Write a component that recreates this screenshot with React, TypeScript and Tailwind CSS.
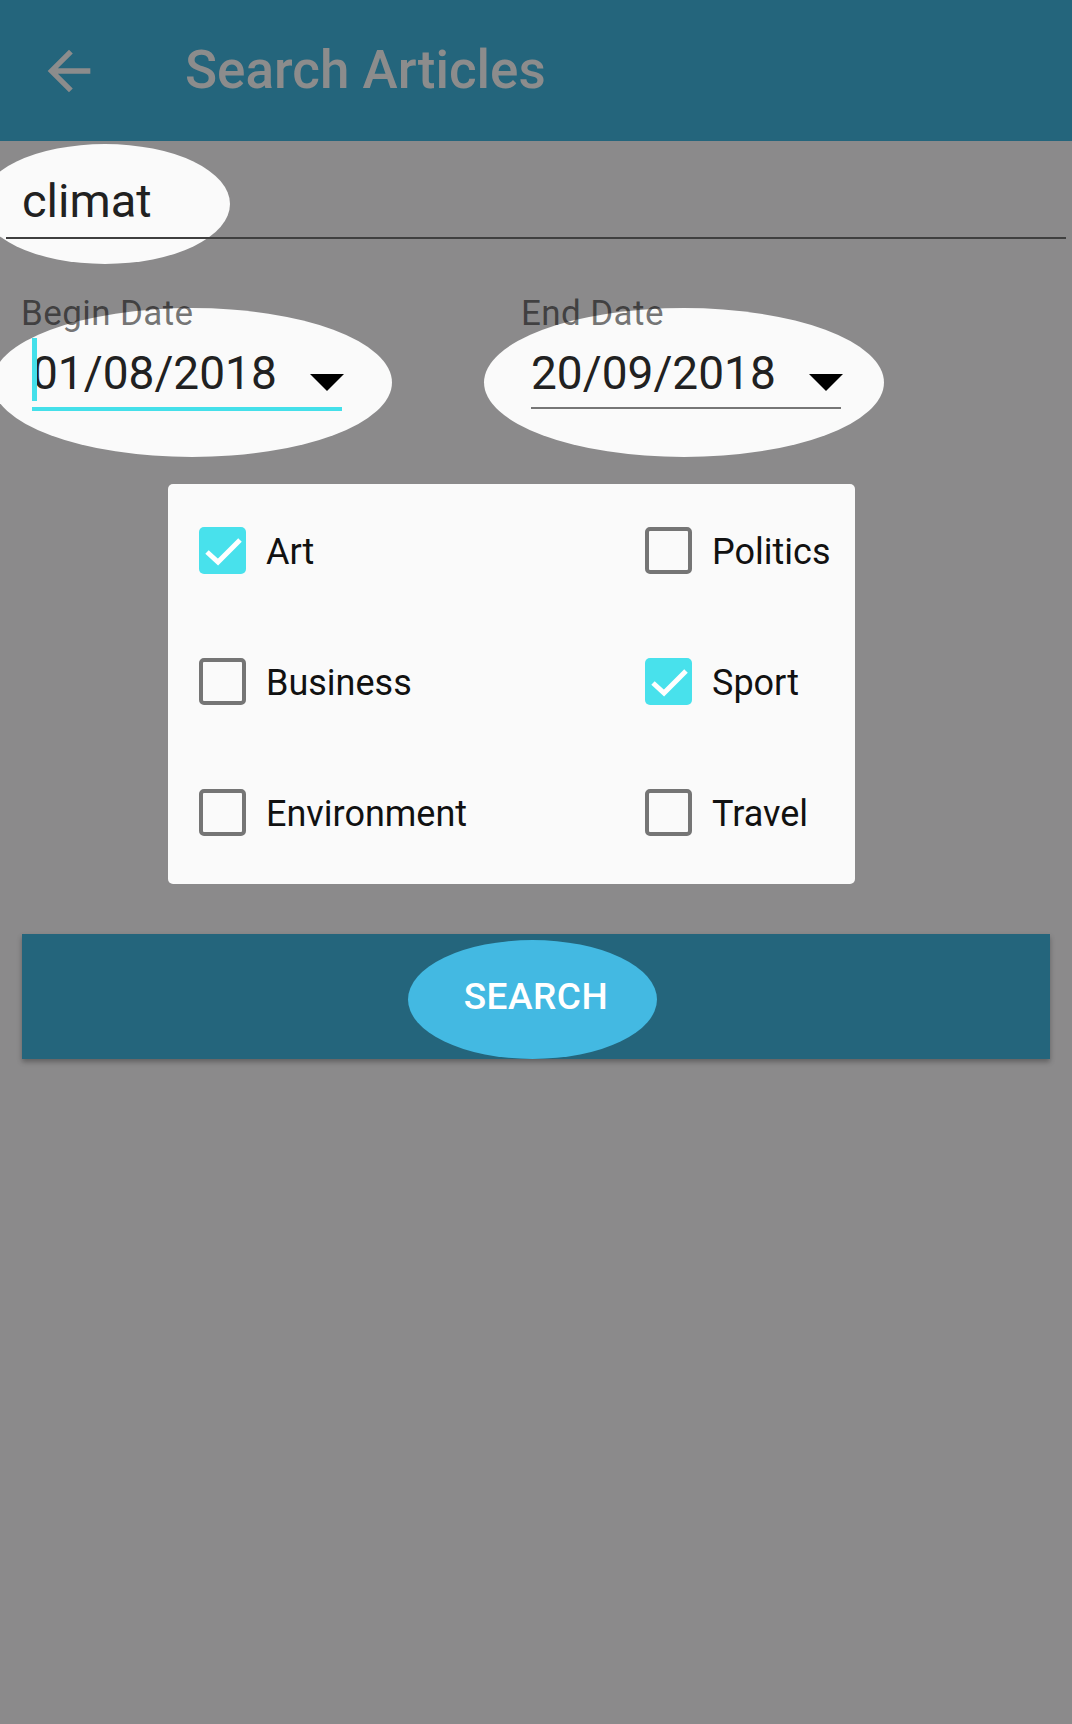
import React from "react";

type Category = { name: string; checked: boolean };

const categories: Category[][] = [
  [
    { name: "Art", checked: true },
    { name: "Politics", checked: false },
  ],
  [
    { name: "Business", checked: false },
    { name: "Sport", checked: true },
  ],
  [
    { name: "Environment", checked: false },
    { name: "Travel", checked: false },
  ],
];

function CheckBox({ checked }: { checked: boolean }) {
  if (checked) {
    return (
      <div className="w-[47px] h-[47px] rounded-[5px] bg-[#48e1ec] flex items-center justify-center shrink-0">
        <svg viewBox="0 0 47 47" className="w-[47px] h-[47px]">
          <polyline
            points="8,25 19,35 41,13"
            fill="none"
            stroke="white"
            strokeWidth="5"
          />
        </svg>
      </div>
    );
  }
  return (
    <div className="w-[47px] h-[47px] rounded-[5px] border-[4px] border-[#757575] shrink-0" />
  );
}

function Triangle() {
  return (
    <svg viewBox="0 0 34 17" className="w-[34px] h-[17px] self-end mb-[10px] -mr-[2px]">
      <polygon points="0,0 34,0 17,17" fill="#000" />
    </svg>
  );
}

export default function App() {
  return (
    <div className="relative w-[1072px] min-h-[1724px] bg-[#8b8a8b] font-['Roboto','Liberation_Sans',sans-serif] overflow-hidden">
      {/* Toolbar */}
      <header className="h-[141px] bg-[#24657c] flex items-center">
        <svg viewBox="0 0 24 24" className="w-[64px] h-[64px] ml-[37px]" fill="#8c8c8c">
          <path d="M20 11H7.83l5.59-5.59L12 4l-8 8 8 8 1.41-1.41L7.83 13H20v-2z" />
        </svg>
        <h1 className="ml-[84px] text-[53px] font-medium text-[#8c8c8c] leading-none">
          Search Articles
        </h1>
      </header>

      {/* Highlight ellipses */}
      <div className="absolute left-[-20px] top-[144px] w-[250px] h-[120px] rounded-[50%] bg-[#fafafa]" />
      <div className="absolute left-[-8px] top-[308px] w-[400px] h-[149px] rounded-[50%] bg-[#fafafa]" />
      <div className="absolute left-[484px] top-[308px] w-[400px] h-[149px] rounded-[50%] bg-[#fafafa]" />

      {/* Query */}
      <div className="relative mx-[6px] pt-[32px] pb-[8px] border-b-2 border-[#3f3f3f]">
        <div className="pl-[16px] text-[47px] leading-[56px] text-[#212121]">climat</div>
      </div>

      {/* Dates */}
      <div className="relative flex pt-[56px]">
        <div className="w-[500px] pl-[21px]">
          <div className="text-[35px] leading-[37px] tracking-[0.4px] text-black/55">Begin Date</div>
          <div className="ml-[11px] mt-[13px] w-[310px] flex justify-between border-b-[4px] border-[#44e0ea] pb-[6px]">
            <div className="relative text-[46px] leading-[56px] text-[#212121]">
              <span className="absolute left-0 top-[-7px] w-[5px] h-[63px] bg-[#44e0ea]" />
              01/08/2018
            </div>
            <Triangle />
          </div>
        </div>
        <div className="pl-[21px]">
          <div className="text-[35px] leading-[37px] tracking-[0.4px] text-black/55">End Date</div>
          <div className="ml-[10px] mt-[13px] w-[310px] flex justify-between border-b-2 border-[#767676] pb-[6px]">
            <div className="text-[46px] leading-[56px] text-[#212121]">20/09/2018</div>
            <Triangle />
          </div>
        </div>
      </div>

      {/* Categories */}
      <div className="relative ml-[168px] mt-[73px] w-[687px] h-[400px] rounded-[5px] bg-[#fafafa] pt-[43px] pl-[31px] flex flex-col gap-[84px]">
        {categories.map((row, i) => (
          <div key={i} className="grid grid-cols-[446px_1fr] h-[47px]">
            {row.map((c) => (
              <div key={c.name} className="flex items-center gap-[20px]">
                <CheckBox checked={c.checked} />
                <span className="mt-[3px] text-[36px] leading-none text-[#111]">{c.name}</span>
              </div>
            ))}
          </div>
        ))}
      </div>

      {/* Search button bar */}
      <div className="relative ml-[22px] mt-[50px] w-[1028px] h-[125px] bg-[#24657c] shadow-[0_3px_5px_rgba(0,0,0,0.3)] flex items-center justify-center">
        <div className="absolute left-[386px] top-[6px] w-[249px] h-[119px] rounded-[50%] bg-[#43b9e2]" />
        <span className="relative text-[37px] font-medium text-white leading-none tracking-[0.5px]">SEARCH</span>
      </div>
    </div>
  );
}
